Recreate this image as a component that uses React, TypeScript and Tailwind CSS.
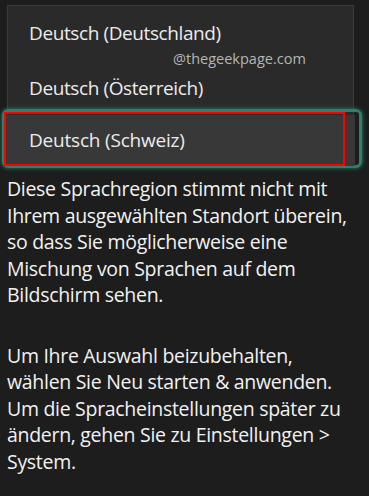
const para1 = [
  "Diese Sprachregion stimmt nicht mit",
  "Ihrem ausgewählten Standort überein,",
  "so dass Sie möglicherweise eine",
  "Mischung von Sprachen auf dem",
  "Bildschirm sehen.",
];

const para2 = [
  "Um Ihre Auswahl beizubehalten,",
  "wählen Sie Neu starten & anwenden.",
  "Um die Spracheinstellungen später zu",
  "ändern, gehen Sie zu Einstellungen >",
  "System.",
];

export default function App() {
  return (
    <div className="relative h-[496px] w-[369px] overflow-hidden bg-[#1d1d1d] font-['Open_Sans',sans-serif] text-[#ececec]">
      {/* Dropdown list */}
      <div className="relative ml-[7px] mt-[5px] flex w-[347px] flex-col border-x border-t border-[#3a3a3a] bg-[#2a2a2a]">
        <div className="flex h-[55px] items-center pl-[21px] text-[19px] tracking-[-0.4px]">Deutsch (Deutschland)</div>
        <div className="flex h-[54px] items-center pl-[21px] text-[19px] tracking-[-0.4px]">Deutsch (Österreich)</div>
        <div className="relative h-[51px]">
          <div className="absolute -bottom-[2px] -left-[6px] -right-[9px] -top-[6px] rounded-[6px] border-[3px] border-[#2f7f6c] shadow-[0_0_4px_#2f7f6c]" />
          <div className="absolute inset-x-[-2px] bottom-0 top-0 flex items-center bg-[#383838] pl-[23px] text-[19px] tracking-[-0.2px]">
            Deutsch (Schweiz)
          </div>
          <div className="absolute -left-[4px] bottom-[0px] right-[8px] top-[-3px] border-[2px] border-[#ff0000]" />
        </div>
        {/* Watermark */}
        <div className="absolute left-[165px] top-[42px] text-[14.5px] text-[#b5b5b5]">@thegeekpage.com</div>
      </div>

      {/* Message */}
      <div className="mt-[10px] flex flex-col gap-[34px] px-[7px] text-[19.5px] leading-[26.5px] tracking-[-0.3px] text-[#f2f2f2]">
        <p className="flex flex-col whitespace-nowrap">
          {para1.map((l) => (
            <span key={l}>{l}</span>
          ))}
        </p>
        <p className="flex flex-col whitespace-nowrap">
          {para2.map((l) => (
            <span key={l}>{l}</span>
          ))}
        </p>
      </div>
    </div>
  );
}
